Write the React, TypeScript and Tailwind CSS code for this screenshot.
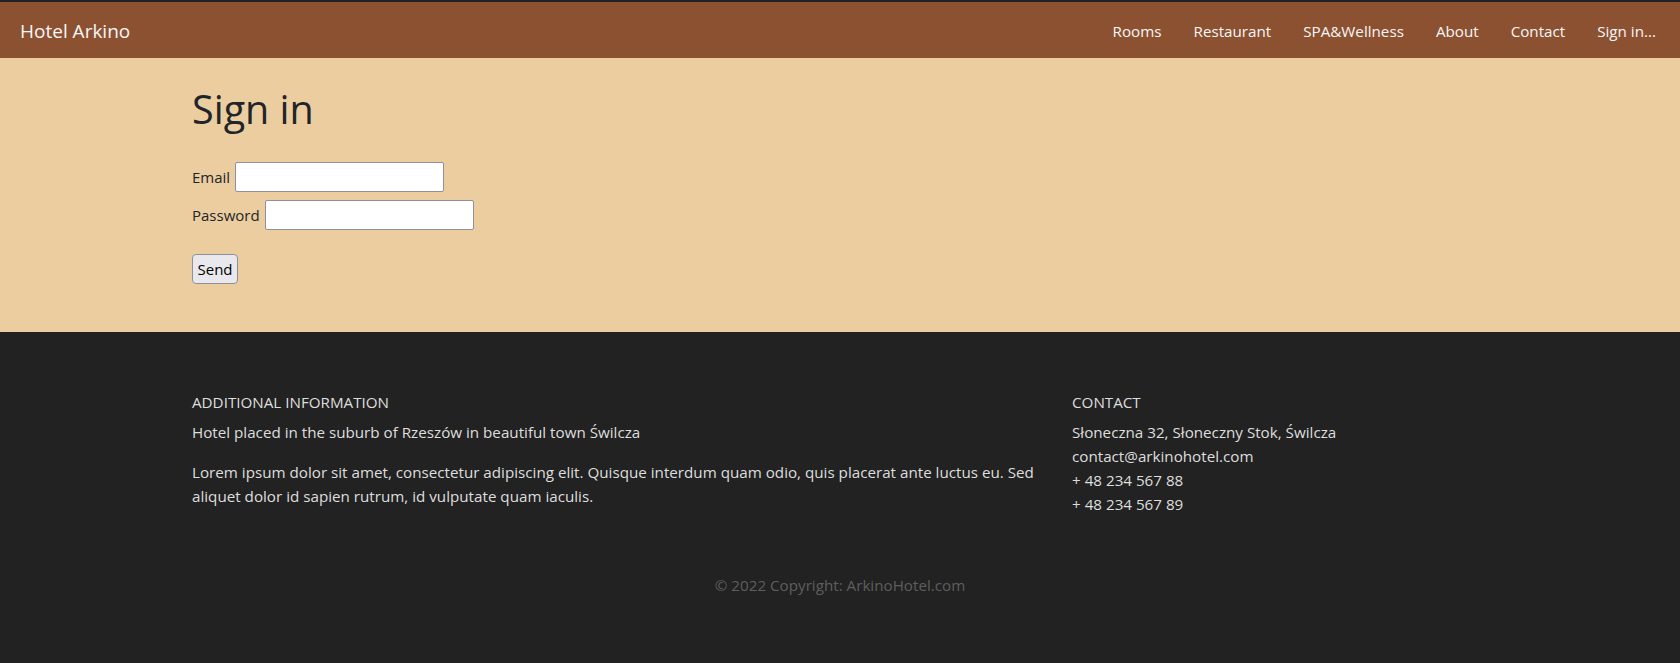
export default function App() {
    const links = ['Rooms', 'Restaurant', 'SPA&Wellness', 'About', 'Contact', 'Sign in...'];

    return (
        <div className="min-h-screen bg-[#222222] pt-[2px] font-['Open_Sans',sans-serif] text-[15px]">
            {/* Navbar */}
            <nav className="h-[56px] bg-[#8c5131] flex items-center justify-between pl-5 pr-2 pt-[3px]">
                <a className="text-[19px] text-[#f7f7f7]">Hotel Arkino</a>
                <ul className="flex items-center">
                    {links.map((l) => (
                        <li key={l} className="px-4 text-[#f7f7f7] text-[15.2px]">{l}</li>
                    ))}
                </ul>
            </nav>

            {/* Sign in form */}
            <main className="h-[274px] bg-[#eccd9f] pt-[27px] text-[#212529]">
                <div className="mx-auto w-[1296px]">
                    <h1 className="h-12 text-[39.5px] leading-[48px]">Sign in</h1>
                    <form className="mt-[29px] flex flex-col items-start">
                        <div className="flex items-center gap-[5px] h-[30px]">
                            <label>Email</label>
                            <input type="text" className="w-[209px] h-[30px] bg-white border border-[#8f8f9d] rounded-[2px]" />
                        </div>
                        <div className="flex items-center gap-[5px] h-[30px] mt-2">
                            <label>Password</label>
                            <input type="password" className="w-[209px] h-[30px] bg-white border border-[#8f8f9d] rounded-[2px]" />
                        </div>
                        <button type="button" className="mt-6 w-[46px] h-[30px] bg-[#e9e9ed] border border-[#8f8f9d] rounded-[4px] text-black text-[15px]">
                            Send
                        </button>
                    </form>
                </div>
            </main>

            {/* Footer */}
            <footer className="text-[#dedede] text-[15.2px]">
                <div className="mx-auto w-[1296px] pt-[58px] grid grid-cols-[856px_1fr] gap-6 leading-6">
                    <div>
                        <h6 className="uppercase mb-[6px]">Additional information</h6>
                        <p className="mb-4">Hotel placed in the suburb of Rzeszów in beautiful town Świlcza</p>
                        <p>
                            Lorem ipsum dolor sit amet, consectetur adipiscing elit. Quisque interdum quam odio, quis placerat ante luctus eu. Sed
                            aliquet dolor id sapien rutrum, id vulputate quam iaculis.
                        </p>
                    </div>
                    <div>
                        <h6 className="uppercase mb-[6px]">Contact</h6>
                        <p>Słoneczna 32, Słoneczny Stok, Świlcza</p>
                        <p>contact@arkinohotel.com</p>
                        <p>+ 48 234 567 88</p>
                        <p>+ 48 234 567 89</p>
                    </div>
                </div>
                <div className="mt-[57px] text-center leading-6 text-[#5e5e5e]">
                    © 2022 Copyright: ArkinoHotel.com
                </div>
            </footer>
        </div>
    );
}
